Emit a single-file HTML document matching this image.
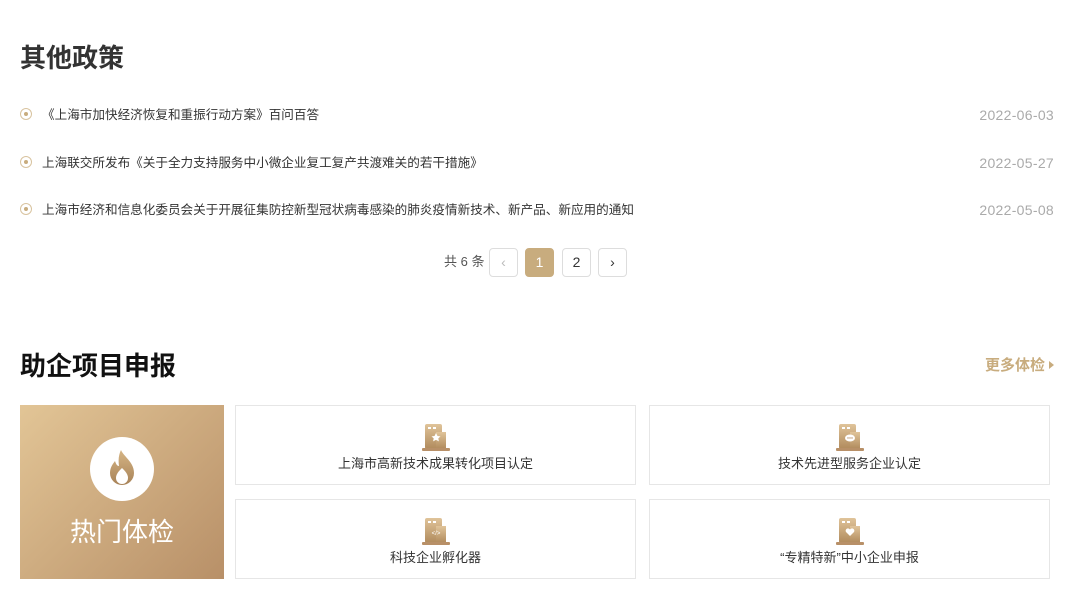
<!DOCTYPE html>
<html><head><meta charset="utf-8"><style>
*{margin:0;padding:0;box-sizing:border-box}
body{width:1080px;height:596px;background:#fff;font-family:"Liberation Sans","Noto Sans CJK SC",sans-serif;color:#333;position:relative;overflow:hidden}
.a{position:absolute}
h2{position:absolute;left:20px;font-size:26px;font-weight:bold;line-height:30px}
.item{position:absolute;left:20px;width:1035px;font-size:12.6px;line-height:18px;height:18px}
.item .dot{position:absolute;left:0;top:3px;width:12px;height:12px;border-radius:50%;border:1.5px solid #d8c39f;background:#fff}
.item .dot:after{content:"";position:absolute;left:2.5px;top:2.5px;width:4px;height:4px;border-radius:50%;background:#c8ac7e}
.item .t{position:absolute;left:22px;top:1px;color:#333}
.item .d{position:absolute;right:1px;top:1px;color:#aaa;font-size:14px;letter-spacing:0.3px}
.pg{position:absolute;top:248px;width:29px;height:29px;border:1px solid #ddd;border-radius:4px;text-align:center;line-height:27px;font-size:14px;color:#333}
.card{position:absolute;width:401px;height:80px;border:1px solid #e6e6e6;background:#fff;text-align:center}
.card .lbl{position:absolute;left:0;right:0;top:50px;font-size:13px;line-height:16px;color:#333}
.card svg{position:absolute;left:186px;top:18px}
</style></head><body>
<h2 style="top:43px;color:#333">其他政策</h2>
<div class="item" style="top:105px"><span class="dot"></span><span class="t">《上海市加快经济恢复和重振行动方案》百问百答</span><span class="d">2022-06-03</span></div>
<div class="item" style="top:153px"><span class="dot"></span><span class="t">上海联交所发布《关于全力支持服务中小微企业复工复产共渡难关的若干措施》</span><span class="d">2022-05-27</span></div>
<div class="item" style="top:200px"><span class="dot"></span><span class="t">上海市经济和信息化委员会关于开展征集防控新型冠状病毒感染的肺炎疫情新技术、新产品、新应用的通知</span><span class="d">2022-05-08</span></div>
<div class="a" style="left:444px;top:253px;font-size:13px;line-height:18px;color:#555">共 6 条</div>
<div class="pg" style="left:489px;color:#bbb">‹</div>
<div class="pg" style="left:525px;background:#c8ac7e;border-color:#c8ac7e;color:#fff">1</div>
<div class="pg" style="left:562px">2</div>
<div class="pg" style="left:598px">›</div>
<h2 style="top:351px;color:#111">助企项目申报</h2>
<div class="a" style="left:985px;top:357px;font-size:15px;font-weight:bold;color:#c8ac7e;line-height:18px">更多体检</div>
<div class="a" style="left:1049px;top:361px;width:0;height:0;border-left:5px solid #c8ac7e;border-top:4px solid transparent;border-bottom:4px solid transparent"></div>
<div class="a" style="left:20px;top:405px;width:204px;height:174px;background:linear-gradient(135deg,#e2c596,#b89068)">
<div class="a" style="left:70px;top:32px;width:64px;height:64px;border-radius:50%;background:#fff">
<svg width="64" height="64" viewBox="0 0 64 64"><defs><linearGradient id="f" x1="0" y1="0" x2="0" y2="1"><stop offset="0" stop-color="#d6b585"/><stop offset="1" stop-color="#a88358"/></linearGradient></defs><path d="M31 13c3 7 13 12 13 23a12 12 0 0 1-24 0c0-6 3-9 5-12 1 3 2 5 4 5-1-7 0-12 2-16z" fill="url(#f)"/><path d="M32 31c3 3 6 6 6 10a6 6 0 0 1-12 0c0-4 3-7 6-10z" fill="#fff"/></svg></div>
<div class="a" style="left:0;right:0;top:111px;text-align:center;color:#fff;font-size:26px;line-height:32px">热门体检</div>
</div>
<svg width="0" height="0" style="position:absolute"><defs><linearGradient id="g" x1="0" y1="0" x2="0" y2="1"><stop offset="0" stop-color="#e0c49a"/><stop offset="1" stop-color="#b08a5c"/></linearGradient></defs></svg>
<div class="card" style="left:235px;top:405px"><svg width="28" height="27" viewBox="0 0 28 27"><rect x="3" y="0" width="17" height="25" rx="2" fill="url(#g)"/><rect x="14" y="8" width="10" height="17" fill="url(#g)"/><rect x="0" y="24" width="28" height="3" rx="1" fill="#b89068"/><rect x="6" y="3" width="3" height="2" fill="#fff"/><rect x="11" y="3" width="3" height="2" fill="#fff"/><path d="M14 9l1.5 3 3 .4-2.2 2 .6 3-2.9-1.5-2.9 1.5.6-3-2.2-2 3-.4z" fill="#fff"/></svg><div class="lbl">上海市高新技术成果转化项目认定</div></div>
<div class="card" style="left:649px;top:405px"><svg width="28" height="27" viewBox="0 0 28 27"><rect x="3" y="0" width="17" height="25" rx="2" fill="url(#g)"/><rect x="14" y="8" width="10" height="17" fill="url(#g)"/><rect x="0" y="24" width="28" height="3" rx="1" fill="#b89068"/><rect x="6" y="3" width="3" height="2" fill="#fff"/><rect x="11" y="3" width="3" height="2" fill="#fff"/><ellipse cx="14" cy="14" rx="5" ry="3.5" fill="#fff"/><circle cx="12" cy="14" r=".7" fill="#b89068"/><circle cx="14" cy="14" r=".7" fill="#b89068"/><circle cx="16" cy="14" r=".7" fill="#b89068"/></svg><div class="lbl">技术先进型服务企业认定</div></div>
<div class="card" style="left:235px;top:499px"><svg width="28" height="27" viewBox="0 0 28 27"><rect x="3" y="0" width="17" height="25" rx="2" fill="url(#g)"/><rect x="14" y="8" width="10" height="17" fill="url(#g)"/><rect x="0" y="24" width="28" height="3" rx="1" fill="#b89068"/><rect x="6" y="3" width="3" height="2" fill="#fff"/><rect x="11" y="3" width="3" height="2" fill="#fff"/><text x="14" y="17" font-size="6" fill="#fff" text-anchor="middle" font-family="Liberation Sans">&lt;/&gt;</text></svg><div class="lbl">科技企业孵化器</div></div>
<div class="card" style="left:649px;top:499px"><svg width="28" height="27" viewBox="0 0 28 27"><rect x="3" y="0" width="17" height="25" rx="2" fill="url(#g)"/><rect x="14" y="8" width="10" height="17" fill="url(#g)"/><rect x="0" y="24" width="28" height="3" rx="1" fill="#b89068"/><rect x="6" y="3" width="3" height="2" fill="#fff"/><rect x="11" y="3" width="3" height="2" fill="#fff"/><path d="M14 18l-4-4a2.2 2.2 0 0 1 4-2.5 2.2 2.2 0 0 1 4 2.5z" fill="#fff"/></svg><div class="lbl">“专精特新”中小企业申报</div></div>
</body></html>
